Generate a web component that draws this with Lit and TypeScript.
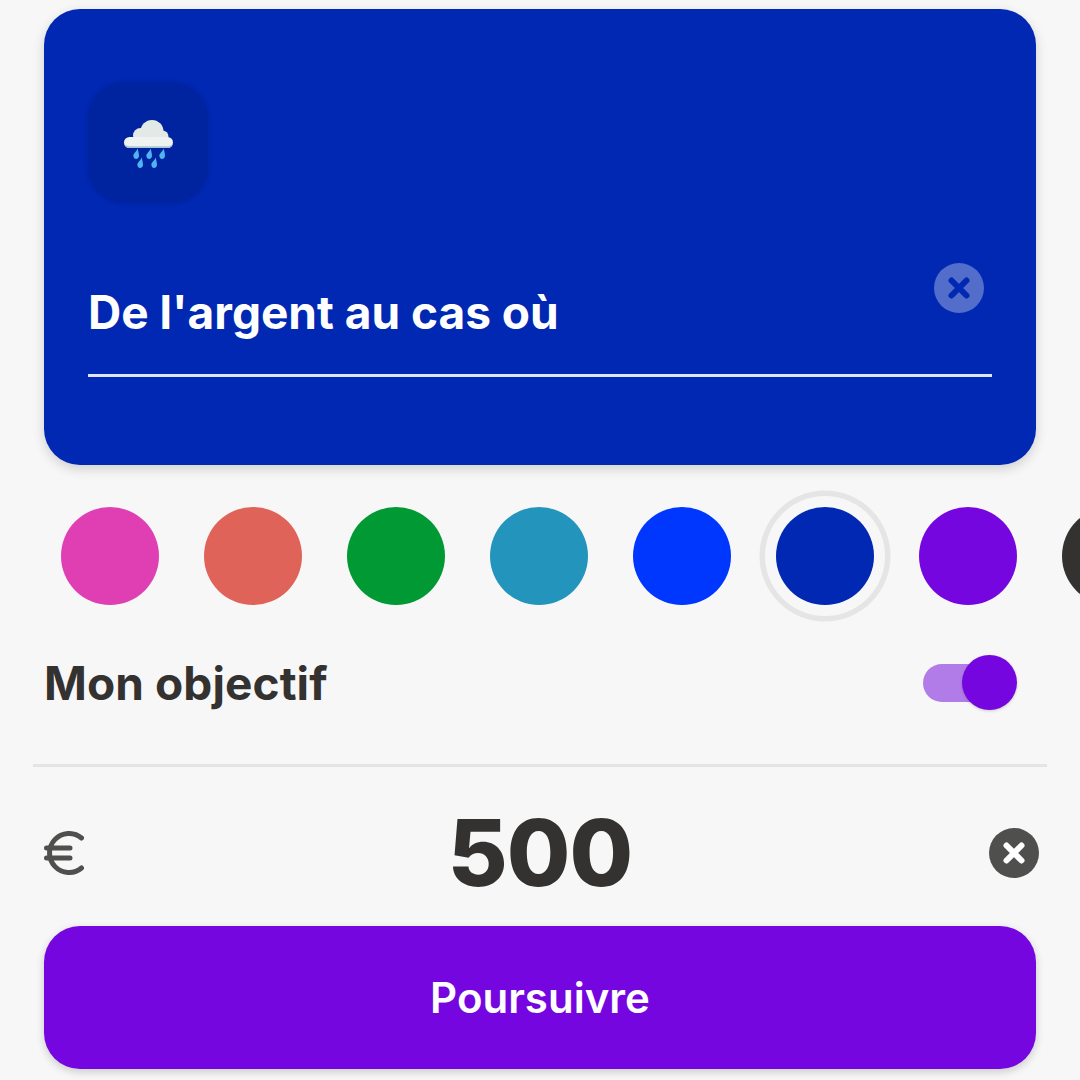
import { LitElement, html, css, svg } from "lit";
import { customElement } from "lit/decorators.js";

const COLORS = ["#e03fb4", "#e0635a", "#009933", "#2394bc", "#0037ff", "#0028b2", "#7506e0", "#333230"];
const DROPS = [[15, 38], [28, 38], [41, 38], [19, 47], [33, 47]];

@customElement("app-root")
export class AppRoot extends LitElement {
  static styles = css`
    :host {
      display: block;
      width: 1080px;
      height: 1080px;
      overflow: hidden;
      background: #f7f7f7;
      font-family: Inter, "Liberation Sans", sans-serif;
      color: #333230;
    }
    .page { display: flex; flex-direction: column; padding: 9px 44px 0; }
    .card {
      height: 456px;
      box-sizing: border-box;
      padding: 74px 44px 0;
      border-radius: 36px;
      background: #0028b2;
      box-shadow: 0 4px 12px rgba(0, 0, 0, 0.16);
      color: #fff;
    }
    .emoji-box {
      width: 120px;
      height: 120px;
      border-radius: 36px;
      background: #00239f;
      box-shadow: 0 0 4px rgba(0, 20, 110, 0.3);
      display: flex;
      align-items: center;
      justify-content: center;
    }
    .title-row {
      margin-top: 60px;
      height: 114px;
      box-sizing: border-box;
      padding-right: 8px;
      border-bottom: 3px solid #dfe4f6;
      display: flex;
      justify-content: space-between;
      align-items: flex-start;
    }
    .title {
      font-size: 46px;
      font-weight: 700;
      line-height: 56px;
      margin-top: 21px;
    }
    .clear { width: 50px; height: 50px; display: block; }
    .swatches { display: flex; gap: 45px; margin: 42px -44px 0 17px; }
    .swatch { flex: none; width: 98px; height: 98px; border-radius: 50%; }
    .selected { box-shadow: 0 0 0 11px #f7f7f7, 0 0 0 16.5px #e5e5e5; }
    .goal {
      display: flex;
      align-items: center;
      justify-content: space-between;
      margin-top: 50px;
      height: 55px;
      padding-right: 19px;
    }
    .goal-label { font-size: 46px; font-weight: 700; letter-spacing: 0.1px; line-height: 56px; }
    .toggle { display: flex; align-items: center; }
    .track { width: 80px; height: 38px; border-radius: 19px; background: #b27ce8; }
    .knob {
      width: 55px;
      height: 55px;
      border-radius: 50%;
      margin-left: -41px;
      background: #7506e0;
      box-shadow: 0 1px 3px rgba(0, 0, 0, 0.18);
    }
    .divider { height: 3px; margin: 54px -11px 0; background: #e4e4e4; }
    .amount {
      display: grid;
      grid-template-columns: 1fr auto 1fr;
      align-items: center;
      height: 159px;
      box-sizing: border-box;
      padding-top: 12px;
    }
    .euro { display: block; width: 40px; height: 44px; }
    .value { font-size: 92px; font-weight: 800; line-height: 100px; letter-spacing: -1px; }
    .amount .clear { justify-self: end; margin-right: -3px; }
    .cta {
      height: 143px;
      border: 0;
      border-radius: 36px;
      background: #7506e0;
      box-shadow: 0 3px 8px rgba(0, 0, 0, 0.18);
      color: #fff;
      font: 600 42px Inter, "Liberation Sans", sans-serif;
    }
  `;

  private clear(bg: string, bgOpacity: number, fg: string) {
    return html`<svg class="clear" viewBox="0 0 50 50">
      <circle cx="25" cy="25" r="25" fill=${bg} fill-opacity=${bgOpacity}></circle>
      <path d="M17.500 17.500 32.500 32.500M32.500 17.500 17.500 32.500" stroke=${fg} stroke-width="6" stroke-linecap="round" fill="none"></path>
    </svg>`;
  }

  render() {
    return html`<div class="page">
      <div class="card">
        <div class="emoji-box">
          <svg width="54" height="54" viewBox="0 0 54 54">
            <g fill="#e3e9e7">
              <circle cx="31" cy="15.500" r="11.500"></circle>
              <circle cx="19.500" cy="19.500" r="7.500"></circle>
              <circle cx="41.500" cy="20.500" r="6"></circle>
            </g>
            <rect x="3" y="21" width="49" height="11" rx="5.500" fill="#eef2f0"></rect>
            <path d="M3.600 29C4.500 31 6 32 8.500 32H46.500C49 32 50.500 31 51.400 29 49 30 47 30.300 45 30.300H10C8 30.300 6 30 3.600 29Z" fill="#a9c8d4"></path>
            <g fill="#4fb4f0">
              ${DROPS.map(
                ([x, y]) => svg`<path transform="translate(${x} ${y}) scale(1.2)" d="M1.500-4.500C.5-2-2.200-.5-2.200 1.500-2.200 3.200-1 4.200 0 4.200 1.500 4.200 2.500 3 2.500 1.500 2.500-.5 1.700-2.500 1.500-4.500Z"></path>`
              )}
            </g>
          </svg>
        </div>
        <div class="title-row">
          <div class="title">De l'argent au cas où</div>
          ${this.clear("#ffffff", 0.32, "#0028b2")}
        </div>
      </div>
      <div class="swatches">
        ${COLORS.map(
          (c) => html`<div class="swatch ${c === "#0028b2" ? "selected" : ""}" style="background:${c}"></div>`
        )}
      </div>
      <div class="goal">
        <div class="goal-label">Mon objectif</div>
        <div class="toggle"><div class="track"></div><div class="knob"></div></div>
      </div>
      <div class="divider"></div>
      <div class="amount">
        <svg class="euro" viewBox="0 0 40 44">
          <path d="M37.500 7A19.500 19.500 0 1 0 37.500 37M2.500 17H26M2.500 27H26" fill="none" stroke="#4f4f4e" stroke-width="5" stroke-linecap="round"></path>
        </svg>
        <div class="value">500</div>
        ${this.clear("#4f4f4e", 1, "#ffffff")}
      </div>
      <button class="cta">Poursuivre</button>
    </div>`;
  }
}
